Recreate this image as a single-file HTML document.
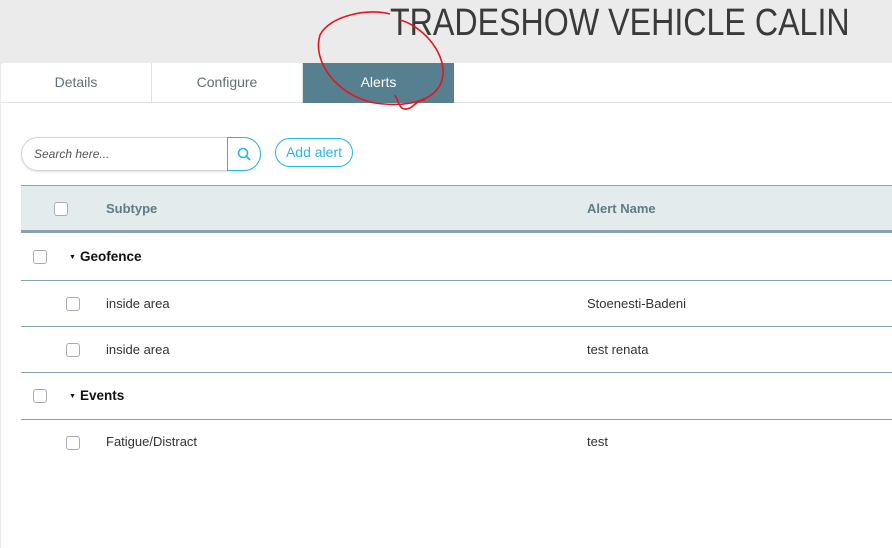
<!DOCTYPE html>
<html><head><style>
*{box-sizing:border-box;margin:0;padding:0}
body{width:892px;height:548px;background:#ebebeb;font-family:"Liberation Sans",Arial,sans-serif;position:relative;overflow:hidden}
.title{position:absolute;left:390px;top:2px;font-size:38px;color:#3a3a3a;white-space:nowrap;transform:scaleX(0.847);transform-origin:0 0}
.card{position:absolute;left:1px;top:63px;width:891px;height:485px;background:#fff;border-radius:3px 0 0 0}
.tabs{position:absolute;left:0;top:0;height:40px;width:891px;border-bottom:1px solid #dde3e5}
.tab{position:absolute;top:0;height:39px;width:151px;text-align:center;line-height:39px;font-size:14px;color:#5f7178;border-right:1px solid #dde3e5}
.tab.on{background:#56808f;color:#fff;border:none;height:40px}
.search{position:absolute;left:21px;top:137px;width:240px;height:34px;border:1px solid #d0d5d7;border-radius:17px;box-shadow:0 1px 2px rgba(0,0,0,.12)}
.search span{position:absolute;left:12px;top:9px;font-size:12px;font-style:italic;color:#555}
.sbtn{position:absolute;left:227px;top:137px;width:34px;height:34px;border:1px solid #29b6e8;border-radius:0 17px 17px 0}
.add{position:absolute;left:275px;top:138px;width:78px;height:29px;border:1px solid #29b6e8;border-radius:15px;color:#29b6e8;font-size:14px;text-align:center;line-height:27px}
.th{position:absolute;left:21px;top:185px;width:871px;height:48px;background:#e4ebec;border-top:1px solid #8fa9b0;border-bottom:3px solid #86a3ab}
.th span{position:absolute;top:15px;font-size:13px;font-weight:bold;color:#5f7b86}
.cb{position:absolute;width:14px;height:14px;border:1px solid #aab;border-radius:3px;background:#fff}
.row{position:absolute;left:21px;width:871px;border-bottom:1px solid #86a3ab;font-size:13px;color:#333}
.row span{position:absolute}
.g{font-weight:bold;color:#111;font-size:13.5px}
.g i{font-style:normal;font-size:7px;vertical-align:2px;margin-right:4px}
</style></head><body>
<div class="title">TRADESHOW VEHICLE CALIN</div>
<div class="card">
 <div class="tabs">
  <div class="tab" style="left:0">Details</div>
  <div class="tab" style="left:151px">Configure</div>
  <div class="tab on" style="left:302px">Alerts</div>
 </div>
</div>
<div class="search"><span>Search here...</span></div>
<div class="sbtn"><svg width="34" height="34" viewBox="0 0 34 34"><circle cx="15" cy="15" r="4.5" fill="none" stroke="#29b6e8" stroke-width="1.6"/><line x1="18.3" y1="18.3" x2="22" y2="22" stroke="#29b6e8" stroke-width="1.8"/></svg></div>
<div class="add">Add alert</div>
<div class="th"><div class="cb" style="left:33px;top:16px"></div><span style="left:85px">Subtype</span><span style="left:566px">Alert Name</span></div>
<div class="row" style="top:233px;height:48px"><div class="cb" style="left:12px;top:17px"></div><span class="g" style="left:48px;top:16px"><i>▼</i>Geofence</span></div>
<div class="row" style="top:281px;height:46px"><div class="cb" style="left:45px;top:16px"></div><span style="left:85px;top:15px">inside area</span><span style="left:566px;top:15px">Stoenesti-Badeni</span></div>
<div class="row" style="top:327px;height:46px"><div class="cb" style="left:45px;top:16px"></div><span style="left:85px;top:15px">inside area</span><span style="left:566px;top:15px">test renata</span></div>
<div class="row" style="top:373px;height:47px"><div class="cb" style="left:12px;top:16px"></div><span class="g" style="left:48px;top:15px"><i>▼</i>Events</span></div>
<div class="row" style="top:420px;height:46px;border:none"><div class="cb" style="left:45px;top:16px"></div><span style="left:85px;top:14px">Fatigue/Distract</span><span style="left:566px;top:14px">test</span></div>
<svg style="position:absolute;left:0;top:0" width="892" height="548"><path d="M390 14 C370 8 330 15 320 35 C312 60 335 95 375 103 C410 108 440 100 443 75 C445 50 420 25 400 20 M395 95 C400 105 400 112 410 108 C415 105 418 100 425 100" fill="none" stroke="#e8141c" stroke-width="1.6"/></svg>
</body></html>
